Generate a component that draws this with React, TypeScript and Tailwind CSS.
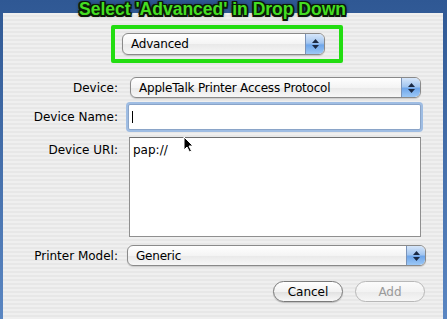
import React from "react";

const font = { fontFamily: '"DejaVu Sans", "Liberation Sans", sans-serif' };

function Stepper() {
  return (
    <span className="flex h-full w-[19px] shrink-0 flex-col items-center justify-center gap-[2px] rounded-r-[5px] border-l border-[#7a93b8] bg-[linear-gradient(180deg,#d6e6fa_0%,#a3c6f0_45%,#6fa6ea_55%,#9cc8f6_100%)]">
      <svg width="7" height="4" viewBox="0 0 7 4">
        <path d="M3.5 0L7 4H0z" fill="#1b2a44" />
      </svg>
      <svg width="7" height="4" viewBox="0 0 7 4">
        <path d="M0 0h7L3.5 4z" fill="#1b2a44" />
      </svg>
    </span>
  );
}

function Popup({ value, className }: { value: string; className: string }) {
  return (
    <div
      className={`flex items-center overflow-hidden rounded-[6px] border border-[#8a8a8a] bg-[linear-gradient(180deg,#ffffff_0%,#f4f4f4_50%,#e9e9e9_52%,#f7f7f7_100%)] shadow-[0_1px_1px_rgba(0,0,0,0.15)] ${className}`}
    >
      <span className="flex-1 truncate pl-[8px] text-[12px] tracking-[-0.2px] text-black">{value}</span>
      <Stepper />
    </div>
  );
}

function Label({ children, className = "" }: { children: React.ReactNode; className?: string }) {
  return (
    <div className={`w-[115px] shrink-0 text-right text-[12px] text-black ${className}`}>{children}</div>
  );
}

export default function App() {
  return (
    <div
      className="relative h-[319px] w-[447px] overflow-hidden bg-[linear-gradient(180deg,#2f5894_0%,#5a86c2_100%)]"
      style={font}
    >
      {/* sheet */}
      <div className="absolute left-[3px] right-[4px] top-[13px] bottom-0 bg-[repeating-linear-gradient(180deg,#efefef_0px,#efefef_2px,#e7e7e7_2px,#e7e7e7_4px)]">
        <div className="flex flex-col">
          <div className="flex justify-center pt-[12px] pl-[8px]">
            <div className="flex h-[38px] w-[232px] items-center rounded-[2px] border-[4px] border-[#22dd11] pl-[7px]">
              <Popup value="Advanced" className="h-[22px] w-[203px] text-[13px]" />
            </div>
          </div>

          <div className="mt-[14px] flex items-center">
            <Label>Device:</Label>
            <Popup value="AppleTalk Printer Access Protocol" className="ml-[12px] h-[21px] w-[291px]" />
          </div>

          <div className="mt-[6px] flex items-center">
            <Label>Device Name:</Label>
            <div className="ml-[10px] flex h-[26px] w-[293px] items-center rounded-[2px] border border-[#8aa4c8] bg-white pl-[3px] shadow-[0_0_0_2px_#9fbde3]">
              <span className="h-[12px] w-px bg-black" />
            </div>
          </div>

          <div className="mt-[7px] flex items-start">
            <Label className="pt-[4px]">Device URI:</Label>
            <div className="ml-[11px] h-[100px] w-[292px] border border-[#8f8f8f] border-t-[#6f6f6f] bg-white px-[3px] pt-[3px] text-[12px] text-black">
              pap://
            </div>
          </div>

          <div className="mt-[8px] flex items-center">
            <Label>Printer Model:</Label>
            <Popup value="Generic" className="ml-[9px] h-[21px] w-[299px]" />
          </div>

          <div className="mt-[15px] flex justify-end gap-[12px] pr-[18px]">
            <button className="h-[21px] w-[70px] rounded-full border border-[#7a7a7a] bg-[linear-gradient(180deg,#ffffff_0%,#f2f2f2_50%,#e2e2e2_55%,#f8f8f8_100%)] text-[12px] text-black shadow-[0_1px_1px_rgba(0,0,0,0.2)]">
              Cancel
            </button>
            <button className="h-[21px] w-[70px] rounded-full border border-[#b8b8b8] bg-[linear-gradient(180deg,#fbfbfb_0%,#f3f3f3_50%,#ebebeb_55%,#f6f6f6_100%)] text-[12px] text-[#9a9a9a]">
              Add
            </button>
          </div>
        </div>
      </div>

      {/* annotation title */}
      <div
        className="absolute left-0 right-0 top-0 pr-[22px] text-center text-[17.5px] font-bold leading-[19px] text-[#44de22] [text-shadow:-1.5px_-1.5px_0_#0b1a08,1.5px_-1.5px_0_#0b1a08,-1.5px_1.5px_0_#0b1a08,1.5px_1.5px_0_#0b1a08,0_-1.5px_0_#0b1a08,0_1.5px_0_#0b1a08,-1.5px_0_0_#0b1a08,1.5px_0_0_#0b1a08,0_0_4px_#000]"
        style={{ fontFamily: '"Liberation Sans", Arial, sans-serif' }}
      >
        Select 'Advanced' in Drop Down
      </div>

      {/* mouse pointer */}
      <svg className="absolute left-[183px] top-[136px]" width="12" height="17" viewBox="0 0 12 17">
        <path d="M1 1v13l3-3 2.5 5 2-1-2.5-5H10z" fill="#000" stroke="#fff" strokeWidth="1" />
      </svg>
    </div>
  );
}
